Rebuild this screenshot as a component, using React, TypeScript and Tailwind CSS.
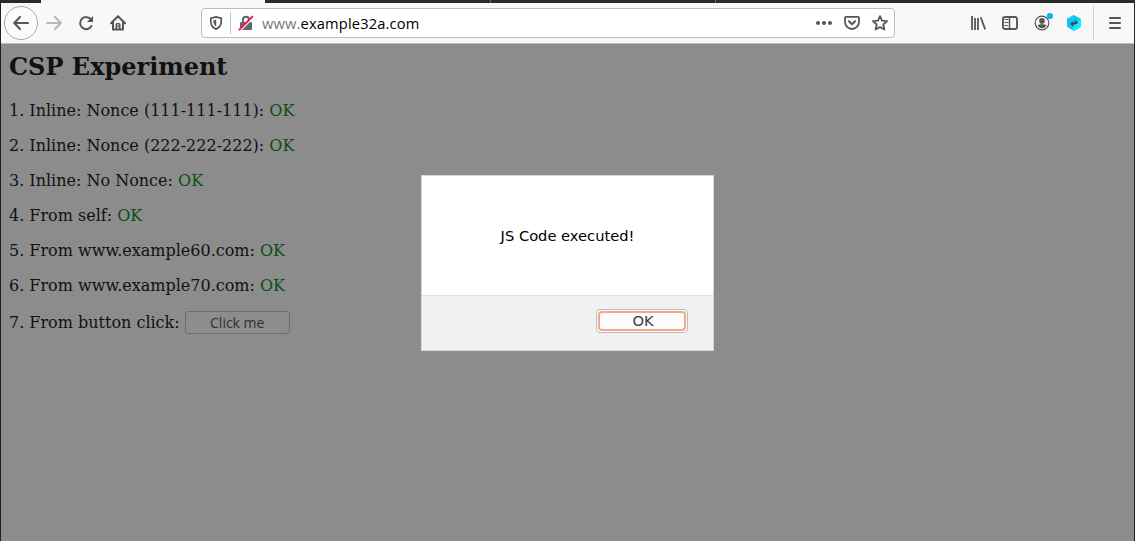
import React from "react";

const INK = "#565657";

function Icon({ children, className = "" }: { children: React.ReactNode; className?: string }) {
  return (
    <svg viewBox="0 0 16 16" className={`size-4 shrink-0 ${className}`} fill="none" stroke={INK} strokeWidth="2" strokeLinecap="round" strokeLinejoin="round">
      {children}
    </svg>
  );
}

function TabStrip() {
  return (
    <div className="-mx-px flex h-[3px] shrink-0 bg-[#2b292b]">
      <div className="w-[41px]" />
      <div className="w-[224px] bg-[#f6f6f6]" />
      <div className="w-[226px] border-r border-[#6a686a]" />
      <div className="w-[225px] border-r border-[#6a686a]" />
    </div>
  );
}

function AddressBar() {
  return (
    <div className="ml-[75px] flex h-[30px] w-[694px] items-center rounded-[4px] border border-[#bdbdbd] bg-white pl-[6px] pr-[6px]">
      <Icon>
        <path d="M8 1.9C6.4 2.6 4.4 3 2.8 3.1V6.6C2.8 10.2 5 12.9 8 14.1C11 12.9 13.2 10.2 13.2 6.6V3.1C11.6 3 9.6 2.6 8 1.9Z" strokeWidth="1.7" />
        <path d="M8.2 4.6C7.2 5 6.2 5.2 5.4 5.3V6.8C5.5 8.9 6.6 10.6 8.2 11.6Z" fill={INK} stroke="none" />
      </Icon>
      <div className="ml-[6px] mr-[7px] h-[22px] w-px bg-[#c8c8c8]" />
      <Icon className="overflow-visible">
        <path d="M5 7V4.8a3 3 0 0 1 6 0V7" stroke="#666667" />
        <rect x="2" y="7" width="12" height="8" rx="1" fill="#666667" stroke="none" />
        <path d="M2.2 15.8 15.2 2.8" stroke="#fff" strokeWidth="1.4" />
        <path d="M1.4 14.6 14.4 1.6" stroke="#f5174f" strokeWidth="2" />
      </Icon>
      <div className="ml-[8px] flex-1 whitespace-nowrap font-['Open_Sans',sans-serif] text-[14.67px] leading-[20px] tracking-[0.16px] text-black">
        <span className="text-[#777]">www.</span>example32a.com
      </div>
      <Icon>
        <g fill={INK} stroke="none">
          <circle cx="2" cy="8" r="2" />
          <circle cx="8" cy="8" r="2" />
          <circle cx="14" cy="8" r="2" />
        </g>
      </Icon>
      <Icon className="ml-[12px]">
        <path d="M2 1.9H14Q15 1.9 15 2.9V7A7 7 0 0 1 1 7V2.9Q1 1.9 2 1.9Z" strokeWidth="1.8" />
        <path d="M4.9 6.2 8 9.2 11.1 6.2" />
      </Icon>
      <Icon className="ml-[12px]">
        <path d="M8 1.1 10 5.6 15 6.1 11.3 9.5 12.4 14.6 8 12 3.6 14.6 4.7 9.5 1 6.1 6 5.6Z" strokeWidth="1.8" />
      </Icon>
    </div>
  );
}

function Toolbar() {
  return (
    <div className="flex h-[41px] shrink-0 items-center border-b border-[#bdbdbd] bg-[#f8f8f8] pl-[3px]">
      <div className="flex size-[34px] shrink-0 items-center justify-center rounded-full border border-[#aaa] bg-[#fbfbfb]">
        <Icon><path d="M15 8H1.5M7 2 1.2 8 7 14" /></Icon>
      </div>
      <Icon className="ml-[8px] opacity-40"><path d="M1 8H14.5M9 2 14.8 8 9 14" /></Icon>
      <Icon className="ml-[16px]">
        <path d="M13 4.6A6 6 0 1 0 13.4 11" />
        <path d="M15 1V7H9Z" fill={INK} stroke="none" />
      </Icon>
      <Icon className="ml-[16px]">
        <path d="M1 8.2 8 1.3 15 8.2M3 7V14.5H13V7" />
        <path d="M6.2 14V9.7Q6.2 8.7 7 8.7H9Q9.8 8.7 9.8 9.7V14" strokeWidth="1.5" />
        <path d="M8 10.8V12" strokeWidth="1.4" />
      </Icon>
      <AddressBar />
      <Icon className="ml-[75px]">
        <path d="M2 1V15M5 3V15M8 3V15M10.7 2.3 15.2 14.5" strokeWidth="1.8" strokeLinecap="butt" />
      </Icon>
      <Icon className="ml-[16px]">
        <rect x="1" y="2" width="14" height="12" rx="2" strokeWidth="1.9" />
        <path d="M7.5 2V14" strokeWidth="1.5" />
        <path d="M3 4.5H6M3 7.5H6M3 10.5H5.5" strokeWidth="1" />
      </Icon>
      <Icon className="ml-[16px] overflow-visible">
        <circle cx="8" cy="8" r="6.8" strokeWidth="1.2" />
        <circle cx="8" cy="5.9" r="2.8" fill={INK} stroke="none" />
        <path d="M3.5 10.2Q5.5 9.4 6.5 9.2H9.5Q10.5 9.4 12.5 10.2Q11 13.2 8 13.2Q5 13.2 3.5 10.2Z" fill={INK} stroke="none" />
        <circle cx="15.9" cy="1" r="3.1" fill="#0bb0f5" stroke="none" />
      </Icon>
      <Icon className="ml-[16px]">
        <path d="M8 .6 14.5 4.2V11.8L8 15.4 1.5 11.8V4.2Z" fill="#12c4f6" stroke="#12c4f6" strokeWidth="1" />
        <path d="M8 15.8 15 11.8V4.2L11 6.5 6 15Z" fill="#14ebfa" stroke="none" />
        <path d="M3.8 9 7.2 6.2V8L8.9 7.3V4.8L12.2 7.8 8.8 10V8.7L7.3 9.2V11.4Z" fill="#374951" stroke="none" />
      </Icon>
      <div className="ml-[11px] mr-[13px] h-[34px] w-px bg-[#d2d2d2]" />
      <Icon>
        <path d="M3 3H13M3 8H13M3 13H13" />
      </Icon>
    </div>
  );
}

const checks = [
  "1. Inline: Nonce (111-111-111): ",
  "2. Inline: Nonce (222-222-222): ",
  "3. Inline: No Nonce: ",
  "4. From self: ",
  "5. From www.example60.com: ",
  "6. From www.example70.com: ",
];

function Experiment() {
  return (
    <main className="flex-1 bg-[#8c8c8c] pl-[8px] pt-[9px] font-['DejaVu_Serif',serif] text-[16px] leading-[19px] text-[#111]">
      <h2 className="mb-[20px] text-[24px] font-bold leading-[28px]">CSP Experiment</h2>
      {checks.map((label) => (
        <p key={label} className="mb-[16px]">
          {label}
          <span className="text-[#0b4e12]">OK</span>
        </p>
      ))}
      <div className="flex items-center whitespace-pre">
        <span className="-mt-px">7. From button click: </span>
        <button className="h-[23px] w-[105px] rounded-[3px] border border-[#6d6d6d] bg-[#8d8d8d] font-['Open_Sans',sans-serif] text-[14px] leading-[20px] text-[#303030]">
          Click me
        </button>
      </div>
    </main>
  );
}

function AlertDialog() {
  return (
    <div className="absolute left-[420px] top-[175px] flex h-[176px] w-[293px] flex-col border border-[#d6d6d6] bg-white font-['DejaVu_Sans',sans-serif] text-[14.67px]">
      <div className="flex flex-1 items-center justify-center pt-px text-black">JS Code executed!</div>
      <div className="flex h-[55px] justify-end border-t border-[#dfdfdf] bg-[#f1f1f1] pr-[25px] pt-[13px]">
        <button className="h-[24px] w-[92px] rounded-[4px] border border-[#bcbcbc] bg-[#fcfcfc] p-px text-[#3b3b3b]">
          <span className="flex h-full items-center justify-center rounded-[4px] border-2 border-[#f3a88c] pl-[2px] leading-none">OK</span>
        </button>
      </div>
    </div>
  );
}

export default function App() {
  return (
    <div className="relative flex h-[541px] w-[1135px] flex-col border-x border-[#211f21]">
      <TabStrip />
      <Toolbar />
      <Experiment />
      <AlertDialog />
    </div>
  );
}
